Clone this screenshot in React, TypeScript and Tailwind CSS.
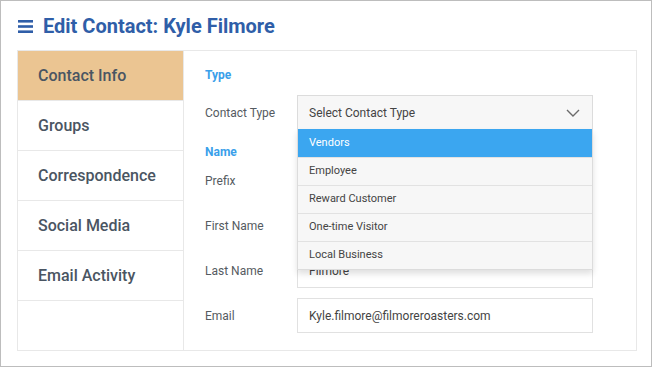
import React from "react";

const navItems = ["Contact Info", "Groups", "Correspondence", "Social Media", "Email Activity"];
const options = ["Vendors", "Employee", "Reward Customer", "One-time Visitor", "Local Business"];

function Field({ label, value }: { label: string; value?: string }) {
  return (
    <div className="flex items-center h-[35px]">
      <div className="w-[92px] text-[12px] text-[#555b61]">{label}</div>
      <div className="w-[296px] h-[35px] border border-[#e1e1e1] bg-white flex items-center px-[11px] text-[12px] text-[#444]">
        {value}
      </div>
    </div>
  );
}

export default function App() {
  return (
    <div
      className="w-[652px] h-[367px] border border-[#bdbdbd] bg-white px-[16px]"
      style={{ fontFamily: "Roboto, 'Liberation Sans', sans-serif" }}
    >
      <div className="h-[49px] flex items-center gap-[10px] pl-[1px]">
        <svg width="15" height="13" viewBox="0 0 15 13" className="mt-[1px]">
          <rect x="0" y="0" width="15" height="2.6" fill="#2f5ea8" />
          <rect x="0" y="5.2" width="15" height="2.6" fill="#2f5ea8" />
          <rect x="0" y="10.4" width="15" height="2.6" fill="#2f5ea8" />
        </svg>
        <div className="text-[20px] font-bold text-[#2f5ea8] leading-none">Edit Contact: Kyle Filmore</div>
      </div>
      <div className="flex w-[620px] h-[301px] border border-[#e8e8e8]">
        <div className="w-[166px] border-r border-[#e8e8e8] flex flex-col">
          {navItems.map((n, i) => (
            <div
              key={n}
              className={
                "h-[50px] flex items-center pl-[20px] text-[16px] font-medium text-[#4a5562] border-b border-[#e8e8e8] " +
                (i === 0 ? "bg-[#ebc592]" : "bg-white")
              }
            >
              {n}
            </div>
          ))}
        </div>
        <div className="flex-1 pl-[21px] pt-[16px] relative">
          <div className="text-[12px] leading-[16px] font-bold text-[#3aa0ea]">Type</div>
          <div className="flex items-center h-[35px] mt-[12px] relative">
            <div className="w-[92px] text-[12px] text-[#555b61]">Contact Type</div>
            <div className="w-[296px] h-[35px] relative">
              <div className="h-[35px] border border-[#dcdcdc] bg-[#f7f7f7] flex items-center justify-between px-[11px] text-[12px] text-[#444]">
                <span>Select Contact Type</span>
                <svg width="14" height="8" viewBox="0 0 14 8" className="mr-[1px]">
                  <path d="M1 1 L7 7 L13 1" fill="none" stroke="#6b6b6b" strokeWidth="1.4" />
                </svg>
              </div>
              <div className="absolute left-0 top-[34px] w-[296px] bg-[#f7f7f7] border-x border-b border-[#dcdcdc] shadow-[0_4px_6px_rgba(0,0,0,0.12)] z-10">
                {options.map((o, i) => (
                  <div
                    key={o}
                    className={
                      "h-[28px] flex items-center px-[11px] text-[11px] " +
                      (i === 0
                        ? "bg-[#3ba6f0] text-white"
                        : "text-[#444] border-t border-[#e2e2e2]")
                    }
                  >
                    {o}
                  </div>
                ))}
              </div>
            </div>
          </div>
          <div className="text-[12px] leading-[16px] font-bold text-[#3aa0ea] mt-[14px]">Name</div>
          <div className="flex flex-col gap-[10px] mt-[3px]">
            <Field label="Prefix" />
            <Field label="First Name" />
            <Field label="Last Name" value="Filmore" />
            <Field label="Email" value="Kyle.filmore@filmoreroasters.com" />
          </div>
        </div>
      </div>
    </div>
  );
}
